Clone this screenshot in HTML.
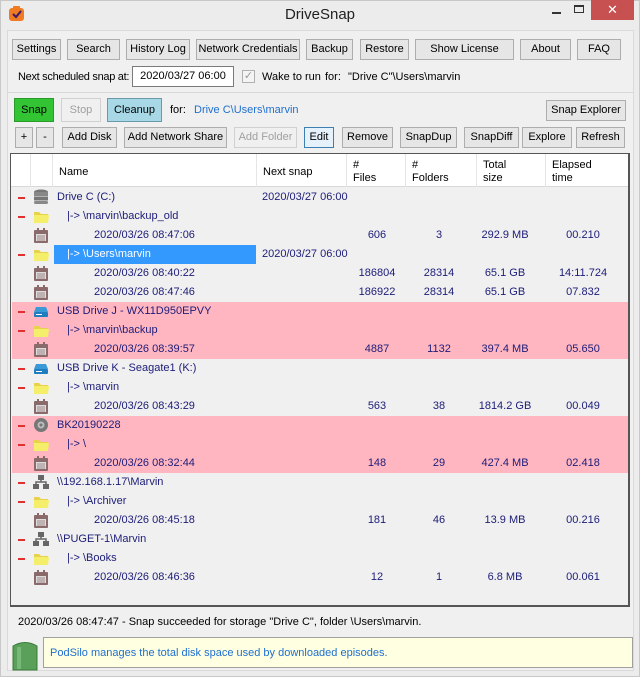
<!DOCTYPE html>
<html><head><meta charset="utf-8">
<style>
*{margin:0;padding:0;box-sizing:border-box}
body{width:640px;height:677px;overflow:hidden;background:#ececec;font-family:"Liberation Sans",sans-serif;font-size:11px;color:#000;position:relative}
.a{position:absolute}
.btn{position:absolute;height:21px;background:#e6e6e6;border:1px solid #adadad;text-align:center;line-height:19px;font-size:11px;white-space:nowrap}
.dis{color:#a0a0a0;background:#f0f0f0;border-color:#d0d0d0}
.row{position:absolute;left:12px;width:616px;height:19px;font-size:11px;color:#1c1c78;line-height:19px}
.row span{position:absolute;white-space:nowrap}
.pink{background:#ffb6c1}
.m{left:6px;top:9px;width:7px;height:2px;background:#e03030}
.c{text-align:center;width:70px}
.hd{position:absolute;top:0;height:33px;border-left:1px solid #e5e5e5;font-size:11px;line-height:13px;padding:5px 0 0 6px}
</style></head><body>
<div class="a" style="left:0;top:0;width:640px;height:677px;border:1px solid #c8c8c8"></div>
<div class="a" style="left:7px;top:30px;width:627px;height:641px;background:#f0f0f0;border:1px solid #dadada"></div>
<svg class="a" style="left:8px;top:6px" width="17" height="16" viewBox="0 0 17 16"><rect x="1" y="2" width="15" height="13" rx="3" fill="#f07b22"/><rect x="5" y="0" width="7" height="4" rx="1" fill="#f07b22"/><path d="M5 8l3 3 5-6" stroke="#3a1a6a" stroke-width="2" fill="none"/></svg>
<div class="a" style="left:0;width:640px;top:6px;text-align:center;font-size:15px;color:#222">DriveSnap</div>
<div class="a" style="left:552px;top:12px;width:9px;height:2px;background:#333"></div>
<div class="a" style="left:574px;top:5px;width:10px;height:8px;border:1px solid #333;border-top-width:2px"></div>
<div class="a" style="left:591px;top:0;width:43px;height:20px;background:#c75050;color:#fff;text-align:center;line-height:20px;font-size:13px">✕</div>
<div class="btn" style="left:12px;top:39px;width:49px">Settings</div>
<div class="btn" style="left:67px;top:39px;width:53px">Search</div>
<div class="btn" style="left:126px;top:39px;width:64px">History Log</div>
<div class="btn" style="left:196px;top:39px;width:104px">Network Credentials</div>
<div class="btn" style="left:306px;top:39px;width:47px">Backup</div>
<div class="btn" style="left:360px;top:39px;width:49px">Restore</div>
<div class="btn" style="left:415px;top:39px;width:99px">Show License</div>
<div class="btn" style="left:520px;top:39px;width:51px">About</div>
<div class="btn" style="left:577px;top:39px;width:44px">FAQ</div>
<div class="a" style="left:18px;top:71px;letter-spacing:-0.3px">Next scheduled snap at:</div>
<div class="a" style="left:132px;top:66px;width:102px;height:21px;background:#fff;border:1px solid #7a7a7a;text-align:center;line-height:19px">2020/03/27 06:00</div>
<div class="a" style="left:242px;top:70px;width:13px;height:13px;border:1px solid #b0b0b0;background:#f4f4f4;color:#999;font-size:11px;line-height:11px;text-align:center">✓</div>
<div class="a" style="left:262px;top:71px">Wake to run</div>
<div class="a" style="left:325px;top:71px">for:</div>
<div class="a" style="left:348px;top:71px">"Drive C"\Users\marvin</div>
<div class="a" style="left:8px;top:92px;width:625px;height:1px;background:#d8d8d8"></div>
<div class="btn" style="left:14px;top:98px;width:40px;height:24px;line-height:22px;background:#33c433;border-color:#2a9a2a">Snap</div>
<div class="btn dis" style="left:61px;top:98px;width:40px;height:24px;line-height:22px">Stop</div>
<div class="btn" style="left:107px;top:98px;width:55px;height:24px;line-height:22px;background:#a8d8e6;border-color:#6a9aaa">Cleanup</div>
<div class="a" style="left:170px;top:104px">for:</div>
<div class="a" style="left:194px;top:104px;color:#1e6fd0">Drive C\Users\marvin</div>
<div class="btn" style="left:546px;top:100px;width:80px">Snap Explorer</div>
<div class="btn" style="left:15px;top:127px;width:18px">+</div>
<div class="btn" style="left:36px;top:127px;width:18px">-</div>
<div class="btn" style="left:62px;top:127px;width:55px">Add Disk</div>
<div class="btn" style="left:124px;top:127px;width:103px">Add Network Share</div>
<div class="btn dis" style="left:234px;top:127px;width:63px">Add Folder</div>
<div class="btn" style="left:304px;top:127px;width:30px;border-color:#3c7fb1;background:#e5f1fb">Edit</div>
<div class="btn" style="left:342px;top:127px;width:51px">Remove</div>
<div class="btn" style="left:400px;top:127px;width:57px">SnapDup</div>
<div class="btn" style="left:464px;top:127px;width:55px">SnapDiff</div>
<div class="btn" style="left:522px;top:127px;width:50px">Explore</div>
<div class="btn" style="left:576px;top:127px;width:49px">Refresh</div>
<div class="a" style="left:10px;top:153px;width:620px;height:454px;border:1px solid #555;background:#f0f0f0;border-right-width:2px;border-bottom-width:2px"></div>
<div class="a" style="left:11px;top:154px;width:617px;height:33px;background:#fff;border-bottom:1px solid #d8d8d8">
<div class="hd" style="left:19px;width:22px"></div>
<div class="hd" style="left:41px;width:204px;padding-top:12px">Name</div>
<div class="hd" style="left:245px;width:90px;padding-top:12px">Next snap</div>
<div class="hd" style="left:335px;width:59px">#<br>Files</div>
<div class="hd" style="left:394px;width:71px">#<br>Folders</div>
<div class="hd" style="left:465px;width:69px">Total<br>size</div>
<div class="hd" style="left:534px;width:83px">Elapsed<br>time</div>
</div>
<svg width="0" height="0" style="position:absolute">
<defs>
<g id="db"><ellipse cx="8" cy="3" rx="7" ry="2.5" fill="#777"/><rect x="1" y="3" width="14" height="4" fill="#888"/><rect x="1" y="7.5" width="14" height="4" fill="#777"/><rect x="1" y="12" width="14" height="3" rx="1.5" fill="#888"/></g>
<g id="fo"><path d="M1 4h5l2 2h7v9H1z" fill="#e8d24a"/><path d="M1 7h15l-1 8H1z" fill="#f5ee6a"/></g>
<g id="ca"><rect x="1" y="3" width="14" height="13" rx="1" fill="#8a6a6a"/><rect x="3" y="7" width="10" height="7" fill="#ddd"/><rect x="4" y="1" width="2" height="4" fill="#8a6a6a"/><rect x="10" y="1" width="2" height="4" fill="#8a6a6a"/><path d="M4 9h8M4 11h8M4 13h8" stroke="#8a6a6a" stroke-width="0.8"/></g>
<g id="us"><path d="M3 4h10l2 5H1z" fill="#3a9ad8"/><rect x="1" y="9" width="14" height="5" rx="1" fill="#1f7dc0"/><rect x="3" y="11" width="6" height="1" fill="#fff"/></g>
<g id="di"><circle cx="8" cy="8" r="7" fill="#777"/><circle cx="8" cy="8" r="3.5" fill="#bbb"/><circle cx="8" cy="8" r="1.5" fill="#777"/></g>
<g id="ne"><rect x="5" y="1" width="6" height="5" fill="#666"/><rect x="0" y="10" width="6" height="5" fill="#666"/><rect x="10" y="10" width="6" height="5" fill="#666"/><path d="M8 6v2M3 10V8h10v2" stroke="#666" stroke-width="1.5" fill="none"/></g>
</defs></svg>
<div id="rows">
<div class="row" style="top:188px"><span class="m"></span><svg class="a" style="left:21px;top:1px" width="16" height="16"><use href="#db"/></svg><span style="left:45px">Drive C (C:)</span><span style="left:250px">2020/03/27 06:00</span></div>
<div class="row" style="top:207px"><span class="m"></span><svg class="a" style="left:21px;top:1px" width="16" height="16"><use href="#fo"/></svg><span style="left:55px">|-&gt; \marvin\backup_old</span></div>
<div class="row" style="top:226px"><svg class="a" style="left:21px;top:1px" width="16" height="16"><use href="#ca"/></svg><span style="left:82px">2020/03/26 08:47:06</span><span class="c" style="left:330px">606</span><span class="c" style="left:392px">3</span><span class="c" style="left:458px">292.9 MB</span><span class="c" style="left:536px">00.210</span></div>
<div class="row" style="top:245px"><span class="m"></span><svg class="a" style="left:21px;top:1px" width="16" height="16"><use href="#fo"/></svg><span style="left:42px;width:202px;height:19px;background:#3399ff;color:#fff;padding-left:13px">|-&gt; \Users\marvin</span><span style="left:250px">2020/03/27 06:00</span></div>
<div class="row" style="top:264px"><svg class="a" style="left:21px;top:1px" width="16" height="16"><use href="#ca"/></svg><span style="left:82px">2020/03/26 08:40:22</span><span class="c" style="left:330px">186804</span><span class="c" style="left:392px">28314</span><span class="c" style="left:458px">65.1 GB</span><span class="c" style="left:536px">14:11.724</span></div>
<div class="row" style="top:283px"><svg class="a" style="left:21px;top:1px" width="16" height="16"><use href="#ca"/></svg><span style="left:82px">2020/03/26 08:47:46</span><span class="c" style="left:330px">186922</span><span class="c" style="left:392px">28314</span><span class="c" style="left:458px">65.1 GB</span><span class="c" style="left:536px">07.832</span></div>
<div class="row pink" style="top:302px"><span class="m"></span><svg class="a" style="left:21px;top:1px" width="16" height="16"><use href="#us"/></svg><span style="left:45px">USB Drive J - WX11D950EPVY</span></div>
<div class="row pink" style="top:321px"><span class="m"></span><svg class="a" style="left:21px;top:1px" width="16" height="16"><use href="#fo"/></svg><span style="left:55px">|-&gt; \marvin\backup</span></div>
<div class="row pink" style="top:340px"><svg class="a" style="left:21px;top:1px" width="16" height="16"><use href="#ca"/></svg><span style="left:82px">2020/03/26 08:39:57</span><span class="c" style="left:330px">4887</span><span class="c" style="left:392px">1132</span><span class="c" style="left:458px">397.4 MB</span><span class="c" style="left:536px">05.650</span></div>
<div class="row" style="top:359px"><span class="m"></span><svg class="a" style="left:21px;top:1px" width="16" height="16"><use href="#us"/></svg><span style="left:45px">USB Drive K - Seagate1 (K:)</span></div>
<div class="row" style="top:378px"><span class="m"></span><svg class="a" style="left:21px;top:1px" width="16" height="16"><use href="#fo"/></svg><span style="left:55px">|-&gt; \marvin</span></div>
<div class="row" style="top:397px"><svg class="a" style="left:21px;top:1px" width="16" height="16"><use href="#ca"/></svg><span style="left:82px">2020/03/26 08:43:29</span><span class="c" style="left:330px">563</span><span class="c" style="left:392px">38</span><span class="c" style="left:458px">1814.2 GB</span><span class="c" style="left:536px">00.049</span></div>
<div class="row pink" style="top:416px"><span class="m"></span><svg class="a" style="left:21px;top:1px" width="16" height="16"><use href="#di"/></svg><span style="left:45px">BK20190228</span></div>
<div class="row pink" style="top:435px"><span class="m"></span><svg class="a" style="left:21px;top:1px" width="16" height="16"><use href="#fo"/></svg><span style="left:55px">|-&gt; \</span></div>
<div class="row pink" style="top:454px"><svg class="a" style="left:21px;top:1px" width="16" height="16"><use href="#ca"/></svg><span style="left:82px">2020/03/26 08:32:44</span><span class="c" style="left:330px">148</span><span class="c" style="left:392px">29</span><span class="c" style="left:458px">427.4 MB</span><span class="c" style="left:536px">02.418</span></div>
<div class="row" style="top:473px"><span class="m"></span><svg class="a" style="left:21px;top:1px" width="16" height="16"><use href="#ne"/></svg><span style="left:45px">\\192.168.1.17\Marvin</span></div>
<div class="row" style="top:492px"><span class="m"></span><svg class="a" style="left:21px;top:1px" width="16" height="16"><use href="#fo"/></svg><span style="left:55px">|-&gt; \Archiver</span></div>
<div class="row" style="top:511px"><svg class="a" style="left:21px;top:1px" width="16" height="16"><use href="#ca"/></svg><span style="left:82px">2020/03/26 08:45:18</span><span class="c" style="left:330px">181</span><span class="c" style="left:392px">46</span><span class="c" style="left:458px">13.9 MB</span><span class="c" style="left:536px">00.216</span></div>
<div class="row" style="top:530px"><span class="m"></span><svg class="a" style="left:21px;top:1px" width="16" height="16"><use href="#ne"/></svg><span style="left:45px">\\PUGET-1\Marvin</span></div>
<div class="row" style="top:549px"><span class="m"></span><svg class="a" style="left:21px;top:1px" width="16" height="16"><use href="#fo"/></svg><span style="left:55px">|-&gt; \Books</span></div>
<div class="row" style="top:568px"><svg class="a" style="left:21px;top:1px" width="16" height="16"><use href="#ca"/></svg><span style="left:82px">2020/03/26 08:46:36</span><span class="c" style="left:330px">12</span><span class="c" style="left:392px">1</span><span class="c" style="left:458px">6.8 MB</span><span class="c" style="left:536px">00.061</span></div>
</div>
<div class="a" style="left:18px;top:616px">2020/03/26 08:47:47 - Snap succeeded for storage "Drive C", folder \Users\marvin.</div>
<svg class="a" style="left:12px;top:639px" width="26" height="32" viewBox="0 0 26 32"><path d="M1 7Q13 0 25 7V31H1z" fill="#5aa05a" stroke="#3a7a3a"/><rect x="5" y="8" width="4" height="22" fill="#8cc88c" opacity="0.6"/></svg>
<div class="a" style="left:43px;top:637px;width:590px;height:31px;background:#ffffe1;border:1px solid #a0a0a0;color:#1e6fd0;padding:9px 0 0 6px;font-size:11px">PodSilo manages the total disk space used by downloaded episodes.</div>
<div class="a" style="left:1px;top:1px;width:590px;height:28px;background:#ececec;z-index:-1"></div>
</body></html>
